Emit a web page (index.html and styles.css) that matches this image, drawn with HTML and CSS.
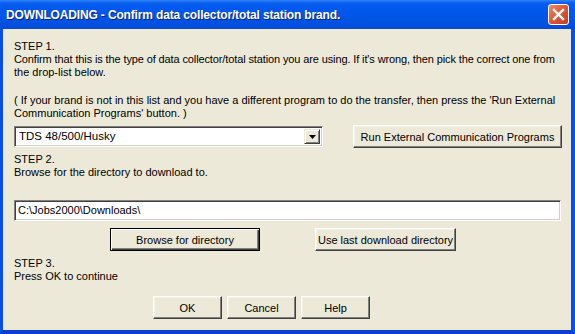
FILE: index.html
```html
<!DOCTYPE html>
<html lang="en">
<head>
  <meta charset="UTF-8">
  <meta name="viewport" content="width=device-width, initial-scale=1.0">
  <title>DOWNLOADING</title>
  <link rel="stylesheet" href="styles.css">
</head>
<body>
  <div class="window">
    <!-- Barra del titolo -->
    <div class="titlebar">
      <span class="title">DOWNLOADING - Confirm data collector/total station brand.</span>
      <span class="close">
        <svg width="13" height="13" viewBox="0 0 13 13">
          <path d="M2 2 L11 11 M11 2 L2 11" stroke="#fff" stroke-width="2.4" stroke-linecap="square"/>
        </svg>
      </span>
    </div>

    <div class="client">
      <p class="text">STEP 1.<br><span class="tight">Confirm that this is the type of data collector/total station you are using. If it's wrong, then pick the correct one from</span><br>the drop-list below.</p>
      <p class="text note">( If your brand is not in this list and you have a different program to do the transfer, then press the 'Run External<br>Communication Programs' button. )</p>

      <div class="row brand-row">
        <div class="combo">
          <span class="combo-value">TDS 48/500/Husky</span>
          <span class="combo-btn">
            <svg width="7" height="4" viewBox="0 0 7 4"><path d="M0 0 H7 L3.5 4 Z" fill="#000"/></svg>
          </span>
        </div>
        <button class="btn btn-run">Run External Communication Programs</button>
      </div>

      <p class="text step2">STEP 2.<br>Browse for the directory to download to.</p>
      <div class="field">C:\Jobs2000\Downloads\</div>

      <div class="row dir-row">
        <button class="btn btn-default btn-browse">Browse for directory</button>
        <button class="btn btn-last">Use last download directory</button>
      </div>

      <p class="text step3">STEP 3.<br>Press OK to continue</p>

      <div class="row actions">
        <button class="btn btn-small">OK</button>
        <button class="btn btn-small">Cancel</button>
        <button class="btn btn-small">Help</button>
      </div>
    </div>
  </div>
</body>
</html>
```

FILE: styles.css
```css
body {
  margin: 0;
  background-color: #ece9d8;
  font-family: "Liberation Sans", Arial, sans-serif;
  font-size: 11px;
  color: #000;
}
.window {
  width: 575px;
  height: 334px;
  box-sizing: border-box;
  background-color: #0054e3;
  border-left: 3px solid #0a4ee8;
  border-right: 4px solid #0a4ee8;
  border-bottom: 4px solid #0a3fd0;
  display: flex;
  flex-direction: column;
}
/* Barra del titolo */
.titlebar {
  height: 29px;
  margin: 0 -4px 0 -3px;
  padding: 0 6px;
  display: flex;
  align-items: center;
  justify-content: space-between;
  background: linear-gradient(#2f83fb 0, #0a5ff0 3px, #0058ee 8px, #0055e5 18px, #0050dd 25px, #0a48d6 29px);
}
.title {
  color: #fff;
  font-weight: bold;
  font-size: 12px;
  letter-spacing: -0.15px;
  padding-top: 1px;
  white-space: nowrap;
  text-shadow: 1px 1px #0a1e8a;
}
.close {
  width: 21px;
  height: 21px;
  box-sizing: border-box;
  border: 1px solid #fff;
  border-radius: 3px;
  background: linear-gradient(135deg, #f08c6c 0, #e05a38 45%, #c83c1c 100%);
  display: flex;
  align-items: center;
  justify-content: center;
}
.close svg {
  display: block;
}
/* Area client */
.client {
  flex: 1;
  background-color: #ece9d8;
  padding: 11px 9px 0 11px;
}
.text {
  margin: 0;
  line-height: 13px;
  white-space: nowrap;
}
.tight {
  letter-spacing: -0.12px;
}
.note {
  margin-top: 15px;
}
.row {
  display: flex;
  align-items: center;
}
.brand-row {
  margin-top: 5px;
  height: 23px;
  gap: 30px;
}
.combo {
  width: 309px;
  height: 21px;
  box-sizing: border-box;
  background-color: #fff;
  border-top: 1px solid #808080;
  border-left: 1px solid #808080;
  border-right: 1px solid #fff;
  border-bottom: 1px solid #fff;
  box-shadow: inset 1px 1px 0 #404040, inset -1px -1px 0 #d4d0c8;
  display: flex;
  align-items: stretch;
  padding: 2px;
}
.combo-value {
  flex: 1;
  padding-left: 2px;
  line-height: 15px;
  font-size: 11.5px;
}
.combo-btn {
  width: 16px;
  box-sizing: border-box;
  background-color: #ece9d8;
  border-top: 1px solid #ece9d8;
  border-left: 1px solid #ece9d8;
  border-right: 1px solid #404040;
  border-bottom: 1px solid #404040;
  box-shadow: inset 1px 1px 0 #fff, inset -1px -1px 0 #808080;
  display: flex;
  align-items: center;
  justify-content: center;
}
.btn {
  font-family: "Liberation Sans", Arial, sans-serif;
  font-size: 11px;
  color: #000;
  height: 23px;
  box-sizing: border-box;
  padding: 0;
  white-space: nowrap;
  background-color: #ece9d8;
  border-top: 1px solid #fff;
  border-left: 1px solid #fff;
  border-right: 1px solid #404040;
  border-bottom: 1px solid #404040;
  box-shadow: inset -1px -1px 0 #808080, inset 1px 1px 0 #f4f2ea;
  border-radius: 0;
}
.btn-default {
  border: 1px solid #000;
  box-shadow: inset 1px 1px 0 #fff, inset -1px -1px 0 #404040, inset -2px -2px 0 #808080;
}
.btn-run {
  width: 209px;
}
.step2 {
  margin-top: 5px;
}
.field {
  margin-top: 21px;
  width: 547px;
  height: 21px;
  box-sizing: border-box;
  background-color: #fff;
  border-top: 1px solid #808080;
  border-left: 1px solid #808080;
  border-right: 1px solid #fff;
  border-bottom: 1px solid #fff;
  box-shadow: inset 1px 1px 0 #404040, inset -1px -1px 0 #d4d0c8;
  padding: 0 3px;
  line-height: 19px;
}
.dir-row {
  margin-top: 7px;
  padding-left: 96px;
  gap: 55px;
}
.btn-browse {
  width: 150px;
}
.btn-last {
  width: 141px;
}
.step3 {
  margin-top: 6px;
}
.actions {
  margin-top: 13px;
  padding-left: 139px;
  gap: 5px;
}
.btn-small {
  width: 69px;
}
```
